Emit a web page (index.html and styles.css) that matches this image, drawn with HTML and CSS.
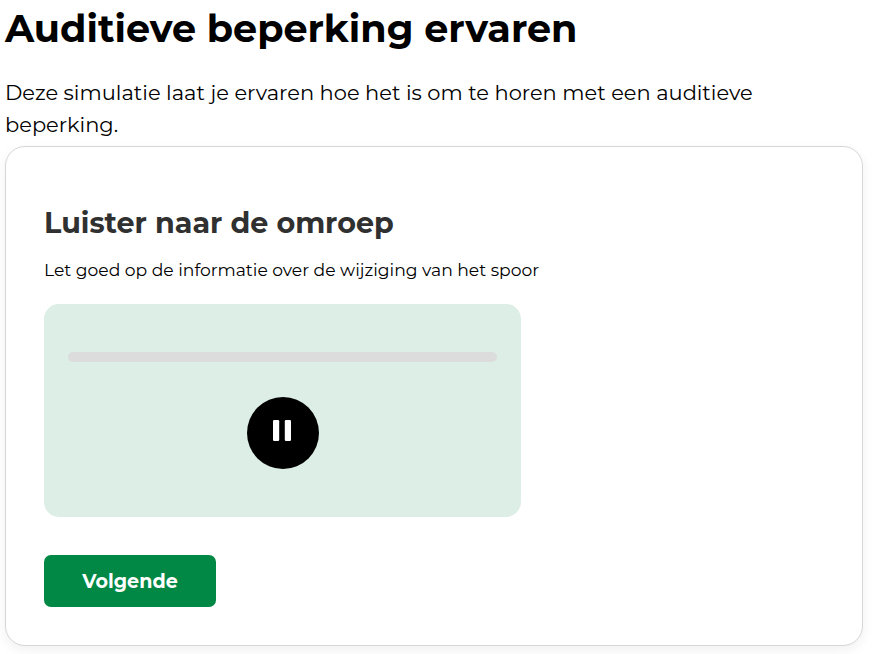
FILE: index.html
```html
<!DOCTYPE html>
<html lang="nl">
<head>
<meta charset="utf-8">
<title>Auditieve beperking ervaren</title>
<link rel="stylesheet" href="styles.css">
</head>
<body>
<main class="page">
  <h1 class="title">Auditieve beperking ervaren</h1>
  <p class="intro">Deze simulatie laat je ervaren hoe het is om te horen met een auditieve<br>beperking.</p>
  <section class="card">
    <h2 class="card-title">Luister naar de omroep</h2>
    <p class="card-text">Let goed op de informatie over de wijziging van het spoor</p>
    <div class="player">
      <div class="track"></div>
      <button class="pause" type="button" aria-label="Pauze">
        <svg class="pause-icon" viewBox="0 0 18 21" aria-hidden="true"><rect x="0" y="0" width="6.2" height="21" rx="1.2"/><rect x="11.8" y="0" width="6.2" height="21" rx="1.2"/></svg>
      </button>
    </div>
    <button class="next" type="button">Volgende</button>
  </section>
</main>
</body>
</html>
```
FILE: styles.css
```css
* { box-sizing: border-box; }
body { margin: 0; background: #fff; color: #000; font-family: Montserrat, Inter, sans-serif; }
h1, h2, p { margin: 0; white-space: nowrap; }
.page { min-height: 654px; padding: 5px 10px 0 5px; }
.title { font-size: 38.15px; line-height: 47px; font-weight: 700; }
.intro { margin-top: 25px; font-size: 20.98px; line-height: 31.5px; font-weight: 400; }
.card { height: 500px; margin-top: 6px; padding: 57px 38px 0; border: 1px solid #d6d6d6; border-radius: 20px; background: #fff; box-shadow: 0 4px 12px rgba(0, 0, 0, .06); }
.card-title { color: #303030; font-size: 28.6px; line-height: 38px; font-weight: 700; }
.card-text { margin-top: 15px; font-size: 17.16px; line-height: 26px; }
.player { display: flex; flex-direction: column; align-items: center; width: 477px; height: 213px; margin-top: 21px; padding: 48px 24px 0; border-radius: 15px; background: #dceee6; }
.track { width: 100%; height: 10px; border-radius: 5px; background: #dcdcdc; }
.pause { display: flex; justify-content: center; width: 72px; height: 72px; margin-top: 35px; padding: 23px 1px 0 0; border: 0; border-radius: 50%; background: #000; }
.pause-icon { width: 18px; height: 21px; fill: #fff; }
.next { display: block; width: 172px; height: 52px; margin-top: 38px; padding: 1px 0 0; border: 0; border-radius: 7px; background: #008844; color: #fff; font: 700 19.1px/51px Montserrat, Inter, sans-serif; }
```
